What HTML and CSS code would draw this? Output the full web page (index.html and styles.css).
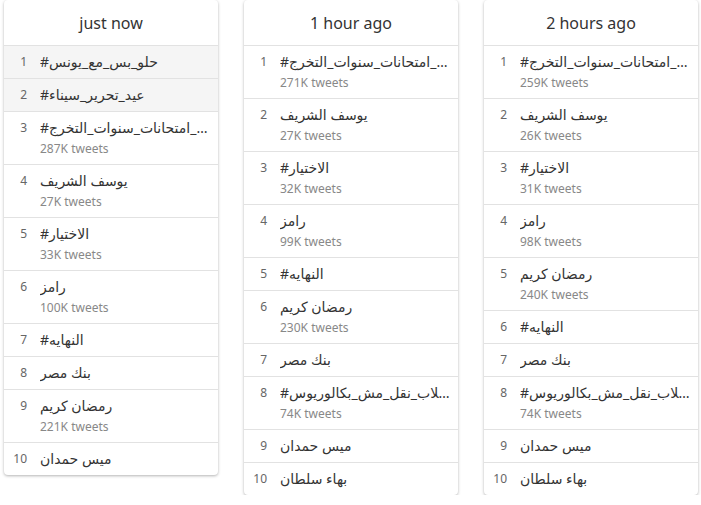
FILE: index.html
```html
<!DOCTYPE html>
<html lang="en">
<head>
<meta charset="utf-8">
<title>Trends</title>
<link rel="stylesheet" href="styles.css">
</head>
<body>
<div class="board">
  <section class="card">
    <h2 class="card-title">just now</h2>
    <ul class="trends">
      <li class="trend active"><span class="num">1</span><div class="info"><div class="name">#حلو_بس_مع_يونس</div></div></li>
      <li class="trend active"><span class="num">2</span><div class="info"><div class="name">#عيد_تحرير_سيناء</div></div></li>
      <li class="trend"><span class="num">3</span><div class="info"><div class="name">#الغاء_امتحانات_سنوات_التخرج</div><div class="count">287K tweets</div></div></li>
      <li class="trend"><span class="num">4</span><div class="info"><div class="name">يوسف الشريف</div><div class="count">27K tweets</div></div></li>
      <li class="trend"><span class="num">5</span><div class="info"><div class="name">#الاختيار</div><div class="count">33K tweets</div></div></li>
      <li class="trend"><span class="num">6</span><div class="info"><div class="name">رامز</div><div class="count">100K tweets</div></div></li>
      <li class="trend"><span class="num">7</span><div class="info"><div class="name">#النهايه</div></div></li>
      <li class="trend"><span class="num">8</span><div class="info"><div class="name">بنك مصر</div></div></li>
      <li class="trend"><span class="num">9</span><div class="info"><div class="name">رمضان كريم</div><div class="count">221K tweets</div></div></li>
      <li class="trend"><span class="num">10</span><div class="info"><div class="name">ميس حمدان</div></div></li>
    </ul>
  </section>
  <section class="card">
    <h2 class="card-title">1 hour ago</h2>
    <ul class="trends">
      <li class="trend"><span class="num">1</span><div class="info"><div class="name">#الغاء_امتحانات_سنوات_التخرج</div><div class="count">271K tweets</div></div></li>
      <li class="trend"><span class="num">2</span><div class="info"><div class="name">يوسف الشريف</div><div class="count">27K tweets</div></div></li>
      <li class="trend"><span class="num">3</span><div class="info"><div class="name">#الاختيار</div><div class="count">32K tweets</div></div></li>
      <li class="trend"><span class="num">4</span><div class="info"><div class="name">رامز</div><div class="count">99K tweets</div></div></li>
      <li class="trend"><span class="num">5</span><div class="info"><div class="name">#النهايه</div></div></li>
      <li class="trend"><span class="num">6</span><div class="info"><div class="name">رمضان كريم</div><div class="count">230K tweets</div></div></li>
      <li class="trend"><span class="num">7</span><div class="info"><div class="name">بنك مصر</div></div></li>
      <li class="trend"><span class="num">8</span><div class="info"><div class="name">#اغلب_طلاب_نقل_مش_بكالوريوس</div><div class="count">74K tweets</div></div></li>
      <li class="trend"><span class="num">9</span><div class="info"><div class="name">ميس حمدان</div></div></li>
      <li class="trend"><span class="num">10</span><div class="info"><div class="name">بهاء سلطان</div></div></li>
    </ul>
  </section>
  <section class="card">
    <h2 class="card-title">2 hours ago</h2>
    <ul class="trends">
      <li class="trend"><span class="num">1</span><div class="info"><div class="name">#الغاء_امتحانات_سنوات_التخرج</div><div class="count">259K tweets</div></div></li>
      <li class="trend"><span class="num">2</span><div class="info"><div class="name">يوسف الشريف</div><div class="count">26K tweets</div></div></li>
      <li class="trend"><span class="num">3</span><div class="info"><div class="name">#الاختيار</div><div class="count">31K tweets</div></div></li>
      <li class="trend"><span class="num">4</span><div class="info"><div class="name">رامز</div><div class="count">98K tweets</div></div></li>
      <li class="trend"><span class="num">5</span><div class="info"><div class="name">رمضان كريم</div><div class="count">240K tweets</div></div></li>
      <li class="trend"><span class="num">6</span><div class="info"><div class="name">#النهايه</div></div></li>
      <li class="trend"><span class="num">7</span><div class="info"><div class="name">بنك مصر</div></div></li>
      <li class="trend"><span class="num">8</span><div class="info"><div class="name">#اغلب_طلاب_نقل_مش_بكالوريوس</div><div class="count">74K tweets</div></div></li>
      <li class="trend"><span class="num">9</span><div class="info"><div class="name">ميس حمدان</div></div></li>
      <li class="trend"><span class="num">10</span><div class="info"><div class="name">بهاء سلطان</div></div></li>
    </ul>
  </section>
</div>
</body>
</html>
```

FILE: styles.css
```css
html, body {
  margin: 0;
  padding: 0;
  background: #ffffff;
}

body {
  font-family: "Noto Sans", "DejaVu Sans", sans-serif;
  color: #333333;
}

.board {
  display: flex;
  align-items: flex-start;
  gap: 26px;
  padding: 0 0 0 4px;
}

.card {
  width: 214px;
  background: #ffffff;
  border-radius: 4px;
  box-shadow: 0 1px 3px rgba(0, 0, 0, 0.3);
  overflow: hidden;
}

.card-title {
  margin: 0;
  height: 45px;
  line-height: 46px;
  text-align: center;
  font-size: 16px;
  font-weight: 400;
  color: #333333;
  border-bottom: 1px solid #e2e2e2;
}

.trends {
  list-style: none;
  margin: 0;
  padding: 0;
}

.trend {
  display: flex;
  align-items: flex-start;
  padding: 5px 5px 5px 0;
  border-bottom: 1px solid #e2e2e2;
}

.trend:last-child {
  border-bottom: none;
}

.trend.active {
  background: #f5f5f5;
}

.num {
  flex: 0 0 23px;
  text-align: right;
  margin-right: 13px;
  font-size: 12px;
  line-height: 22px;
  color: #666666;
}

.info {
  flex: 1;
  min-width: 0;
}

.name {
  font-size: 14px;
  line-height: 22px;
  color: #333333;
  white-space: nowrap;
  overflow: hidden;
  text-overflow: ellipsis;
}

.count {
  font-size: 12px;
  line-height: 20px;
  color: #888888;
}
```
